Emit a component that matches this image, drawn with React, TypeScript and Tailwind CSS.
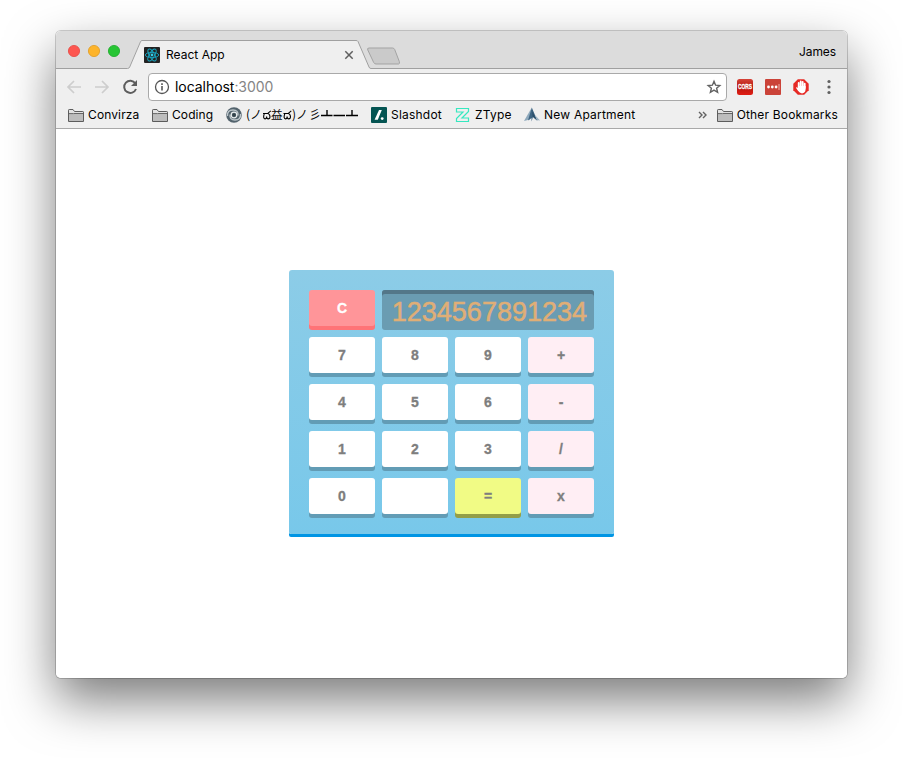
import React from "react";

const keys: { label: string; kind?: "op" | "eq" }[] = [
  { label: "7" }, { label: "8" }, { label: "9" }, { label: "+", kind: "op" },
  { label: "4" }, { label: "5" }, { label: "6" }, { label: "-", kind: "op" },
  { label: "1" }, { label: "2" }, { label: "3" }, { label: "/", kind: "op" },
  { label: "0" }, { label: "" }, { label: "=", kind: "eq" }, { label: "x", kind: "op" },
];

function Key({ label, kind }: { label: string; kind?: "op" | "eq" }) {
  const tone =
    kind === "op"
      ? "bg-[#ffeef4] shadow-[0_4px_#629cb5]"
      : kind === "eq"
        ? "bg-[#f1fb85] shadow-[0_4px_#939e48]"
        : "bg-white shadow-[0_4px_#629cb5]";
  return (
    <button className={`h-9 w-[66px] rounded-[3px] text-center text-[14px] leading-9 font-bold text-[#7e7e7e] [-webkit-text-stroke:0.3px] ${tone}`}>
      {label}
    </button>
  );
}

function Calculator() {
  return (
    <div className="h-[264px] w-[325px] rounded-t-[3px] rounded-b-[2px] bg-linear-to-b from-[#8ccce7] to-[#78c8ea] p-5 font-['Liberation_Sans',Arial,sans-serif] shadow-[0_3px_#0095e4]">
      <div className="flex gap-[7px]">
        <button className="h-9 w-[66px] rounded-[3px] bg-[#ff9599] text-center text-[14px] leading-9 font-bold text-white shadow-[0_4px_#ff7377] [-webkit-text-stroke:0.3px]">
          C
        </button>
        <div className="h-10 w-[212px] rounded-[3px] bg-[#6a9cb2] pr-[7px] text-right text-[27px] leading-[45px] text-[#e0ae76] shadow-[inset_0_4px_#537789] [-webkit-text-stroke:0.5px]">
          1234567891234
        </div>
      </div>
      <div className="mt-[7px] grid grid-cols-[66px_66px_66px_66px] gap-x-[7px] gap-y-[11px]">
        {keys.map((k, i) => (
          <Key key={i} {...k} />
        ))}
      </div>
    </div>
  );
}

function Folder() {
  return (
    <svg width="16" height="13" viewBox="0 0 16 13" className="shrink-0">
      <path d="M.5 12.5V1.2Q.5.5 1.2.5H5L6.5 2.5H14.8Q15.5 2.5 15.5 3.2V12.5Z" fill="#e2e2e2" stroke="#5c5c5c" />
      <path d="M1 12V5H6L7.200 4.500H15V12Z" fill="#bdbdbd" />
      <path d="M1 4.600H5.500L7 4.500H15" fill="none" stroke="#666" />
    </svg>
  );
}

function ReactIcon() {
  return (
    <svg width="16" height="16" viewBox="0 0 16 16" className="shrink-0">
      <rect width="16" height="16" rx="1" fill="#222" />
      <g fill="none" stroke="#18a8c4" strokeWidth=".9">
        <ellipse cx="8" cy="8" rx="6.7" ry="2.6" />
        <ellipse cx="8" cy="8" rx="6.7" ry="2.6" transform="rotate(60 8 8)" />
        <ellipse cx="8" cy="8" rx="6.7" ry="2.6" transform="rotate(120 8 8)" />
      </g>
      <circle cx="8" cy="8" r="1.4" fill="#35cce8" />
    </svg>
  );
}

function TabStrip() {
  return (
    <div className="relative flex h-[38px] bg-[#dcdcdc]">
      <svg className="absolute inset-0" width="791" height="38" viewBox="0 0 791 38">
        <path d="M0 37.5H72Q73 37.5 73.5 36L84.5 10.5Q85 9.5 86 9.5H300Q301.5 9.5 302 10.5L313 36Q313.5 37.5 315 37.5H791V38H0Z" fill="#efefef" />
        <path d="M0 37.5H71.5Q73 37.5 73.7 36L84.5 10.7Q85 9.5 86 9.5H300Q301.5 9.5 302 10.5L313 36Q313.5 37.5 315 37.5H791" fill="none" stroke="#a0a0a0" />
        <path d="M313 17.500H336.500Q338 17.500 338.700 19L343.300 31Q344 33.500 342.500 33.500H320Q318.500 33.500 317.700 32L311.800 19.500Q311 17.500 313 17.500Z" transform="translate(0 -.5)" fill="#cacaca" stroke="#a3a3a3" />
        <circle cx="18" cy="20" r="5.6" fill="#fd5650" stroke="#e54842" strokeWidth=".8" />
        <circle cx="38" cy="20" r="5.6" fill="#fdb42b" stroke="#e09b22" strokeWidth=".8" />
        <circle cx="58" cy="20" r="5.6" fill="#27c534" stroke="#1ca92a" strokeWidth=".8" />
        <path d="M289.300 20.300L296.700 27.700M296.700 20.300L289.300 27.700" stroke="#5f5f5f" strokeWidth="1.500" />
      </svg>
      <div className="relative mt-[16px] ml-[88px] flex h-4 w-[222px] items-center">
        <ReactIcon />
        <span className="ml-[6px] text-[12px] tracking-[0.02px]">React App</span>
      </div>
      <span className="relative mt-[13px] mr-[11px] ml-auto text-[12px] leading-4 tracking-[-0.1px]">James</span>
    </div>
  );
}

function Toolbar() {
  return (
    <div className="flex h-[36px] items-center pl-[10px]">
      <svg width="72" height="18" viewBox="0 0 72 18" fill="none" strokeWidth="1.7" className="mr-[10px] shrink-0">
        <path d="M15 9H2M8 3L2 9L8 15" stroke="#cdcdcd" />
        <path d="M29 9H42M36 3L42 9L36 15" stroke="#cdcdcd" />
        <path d="M69.3 5.3A6.1 6.1 0 1 0 70 11" stroke="#5d5d5d" strokeWidth="2" />
        <path d="M71 2V8H65Z" fill="#5d5d5d" />
      </svg>
      <div className="flex h-7 w-[579px] items-center rounded-[4px] border border-[#a9a9a9] bg-white pr-[4px] pl-[5px]">
        <svg width="16" height="16" viewBox="0 0 16 16" className="shrink-0">
          <circle cx="8" cy="8" r="6.500" fill="none" stroke="#555" strokeWidth="1.300" />
          <path d="M8 7V11.500M8 4.300V5.900" stroke="#555" strokeWidth="1.600" />
        </svg>
        <span className="ml-[5px] text-[14px] leading-5 tracking-[-0.05px]">
          localhost<span className="text-[#858585]">:3000</span>
        </span>
        <svg width="16" height="16" viewBox="0 0 16 16" className="ml-auto">
          <path d="M8 2.300L9.600 6.200L13.800 6.500L10.600 9.200L11.600 13.300L8 11.100L4.400 13.300L5.400 9.200L2.200 6.500L6.400 6.200Z" fill="none" stroke="#626262" strokeWidth="1.400" />
        </svg>
      </div>
      <svg width="108" height="18" viewBox="0 0 108 18" className="ml-[9px]">
        <defs>
          <linearGradient id="cors" x2="0" y2="1">
            <stop stopColor="#d64338" />
            <stop offset=".5" stopColor="#b51910" />
            <stop offset="1" stopColor="#e11d14" />
          </linearGradient>
        </defs>
        <rect x="1" y="1" width="16" height="16" rx="2.500" fill="url(#cors)" />
        <text x="9" y="11.300" textAnchor="middle" textLength="14" lengthAdjust="spacingAndGlyphs" fontSize="7" fontWeight="bold" fill="white" stroke="white" strokeWidth=".3" fontFamily="Liberation Sans, sans-serif">CORS</text>
        <rect x="29" y="1" width="16" height="16" rx="1" fill="#cb4339" />
        <circle cx="32.500" cy="9" r="1.400" fill="white" />
        <circle cx="36.300" cy="9" r="1.400" fill="white" />
        <circle cx="40.100" cy="9" r="1.400" fill="white" />
        <path d="M43 6V12" stroke="#efb0aa" />
        <path d="M61.800 1.300H68.200L72.700 5.800V12.200L68.200 16.700H61.800L57.300 12.200V5.800Z" fill="#e62a25" />
        <path d="M62.700 10V5M64.700 9V3.400M66.700 9V3.900M68.700 10V5.700" stroke="white" strokeWidth="1.800" strokeLinecap="round" />
        <path d="M61.900 8H69.600V11.500Q69.300 15.300 66 15.400Q63.500 15.200 62 12.800L59.900 9.800Q60.500 8.700 61.900 10Z" fill="white" />
        <circle cx="93" cy="3.500" r="1.600" fill="#606060" />
        <circle cx="93" cy="9" r="1.600" fill="#606060" />
        <circle cx="93" cy="14.500" r="1.600" fill="#606060" />
      </svg>
    </div>
  );
}

function Bookmarks() {
  return (
    <div className="flex h-[24px] items-center border-b border-[#a9a9a9] pb-[3px] pl-3 text-[12px] leading-4 whitespace-nowrap">
      <div className="flex w-[84px] items-center gap-[4px]"><Folder /><span className="tracking-[0.12px]">Convirza</span></div>
      <div className="flex w-[74px] items-center gap-[4px]"><Folder /><span className="tracking-[0.1px]">Coding</span></div>
      <div className="flex w-[145px] items-center gap-[4px]">
        <svg width="16" height="16" viewBox="0 0 16 16" className="shrink-0">
          <circle cx="8" cy="8" r="7.800" fill="#53636d" />
          <g fill="none" stroke="#bcc5ca" strokeWidth="1.400">
            <path d="M1.500 9Q1 3 7 3Q12.500 3 12 8.500" />
            <path d="M14.500 7Q15 13 9 13Q3.500 13 4 7.500" />
          </g>
          <circle cx="8" cy="8" r="2.800" fill="none" stroke="#e8ecee" strokeWidth="1.200" />
          <circle cx="8" cy="8" r="1.700" fill="#34434b" />
        </svg>
        <svg width="114" height="18" viewBox="0 0 114 18">
          <g fontSize="12" fill="black" fontFamily="'Noto Sans CJK JP', sans-serif">
            <text x="0" y="13">(</text>
            <text x="4" y="13">ノ</text>
            <text x="25" y="13" fontSize="11.500">益</text>
            <text x="46" y="13">)</text>
            <text x="50" y="13">ノ</text>
            <text x="63" y="13">彡</text>
          </g>
          <g fill="none" stroke="black" strokeWidth="1.100">
            <path d="M17 7.500H22.500M18.200 7.800Q16.700 12.500 19 12.900Q20.600 12.900 20.600 10.500Q20.600 12.900 22.300 12.900Q24.800 12.500 23.600 9Q22.800 7.500 21.500 7.500M21.800 7.300L24.800 4.800" />
            <path d="M37.500 7.500H43M38.700 7.800Q37.200 12.500 39.500 12.900Q41.100 12.900 41.100 10.500Q41.100 12.900 42.800 12.900Q45.300 12.500 44.100 9Q43.300 7.500 42 7.500M42.300 7.300L45.300 4.800" />
            <path d="M75 9.500H86.500M87.500 9.500H99M100 9.500H112M81 9V4M106 9V4" strokeWidth="1.400" />
          </g>
        </svg>
      </div>
      <div className="flex w-[84px] items-center gap-[4px]">
        <svg width="16" height="16" viewBox="0 0 16 16" className="shrink-0">
          <rect width="16" height="16" rx="1" fill="#045452" />
          <path d="M8 3H10.800L6.800 12.800H3.600Z" fill="white" />
          <circle cx="11.200" cy="11.600" r="1.400" fill="white" />
        </svg>
        <span className="tracking-[0.22px]">Slashdot</span>
      </div>
      <div className="flex w-[69px] items-center gap-[4px]">
        <svg width="16" height="16" viewBox="0 0 16 16" className="shrink-0" fill="none" stroke="#36e8c0" strokeWidth="1.200">
          <path d="M1.500 1.500H13.500V4.500L7 11H13.500V14.500H1.500V11.500L8 5H1.500Z" />
        </svg>
        <span className="tracking-[0.2px]">ZType</span>
      </div>
      <div className="flex items-center gap-[4px]">
        <svg width="16" height="16" viewBox="0 0 16 16" className="shrink-0">
          <path d="M7.500 1L0 14L6 12.500Z" fill="#8fa9bc" />
          <path d="M7.800 .5L4 13.500L7.500 11V14.500L9 10L13.500 14Z" fill="#3d6482" />
          <path d="M8.300 4L8.600 9.500L12 12.500Z" fill="#294c67" />
          <path d="M11 8L16 13.500L13 13Z" fill="#9bb2c2" />
        </svg>
        <span className="tracking-[0.22px]">New Apartment</span>
      </div>
      <div className="mr-[9px] ml-auto flex items-center">
        <svg width="9" height="8" viewBox="0 0 9 8" fill="none" stroke="#626262" strokeWidth="1.400" className="mr-[10px]">
          <path d="M1 1L4 4L1 7M5 1L8 4L5 7" />
        </svg>
        <Folder />
        <span className="ml-[4px] tracking-[0.17px]">Other Bookmarks</span>
      </div>
    </div>
  );
}

export default function App() {
  return (
    <div className="h-[758px] w-[903px] overflow-hidden bg-white pt-[31px] pl-[56px] font-['Inter','Noto_Sans_CJK_JP',sans-serif] text-black">
      <div className="h-[647px] w-[791px] rounded-[5px] shadow-[0_0_0_1px_rgba(0,0,0,0.18),0_22px_50px_rgba(0,0,0,0.52)]">
        <div className="flex h-full flex-col overflow-hidden rounded-[5px] bg-white">
          <div className="h-[98px] shrink-0 bg-[#efefef]">
            <TabStrip />
            <Toolbar />
            <Bookmarks />
          </div>
          <main className="flex flex-1 justify-center pt-[141px]">
            <Calculator />
          </main>
        </div>
      </div>
    </div>
  );
}
